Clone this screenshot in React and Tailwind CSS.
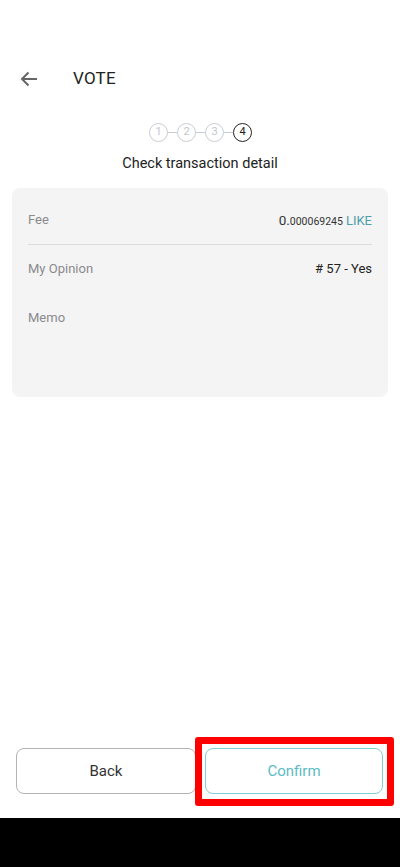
import React from "react";

const Step = ({ n, active }) => (
  <div
    className={`w-[19px] h-[19px] rounded-full border flex items-center justify-center text-[11px] ${
      active ? "border-[#222] text-[#222]" : "border-[#c9ccd6] text-[#c2c5cf]"
    }`}
  >
    {n}
  </div>
);

const Line = () => <div className="w-[9px] h-px bg-[#c9ccd6]" />;

const App = () => {
  return (
    <div className="w-[400px] h-[867px] flex flex-col bg-white font-['Roboto',sans-serif] overflow-hidden">
      <div className="h-[51px]" />
      <div className="h-[56px] flex items-center pl-[20px]">
        <svg width="18" height="16" viewBox="0 0 18 16" fill="none" stroke="#666" strokeWidth="2">
          <path d="M17 8H2M8.5 1.5L2 8l6.5 6.5" />
        </svg>
        <h1 className="ml-[35px] text-[17px] text-[#222] tracking-[0.2px]">VOTE</h1>
      </div>

      <div className="mt-[16px] flex items-center justify-center pl-[1px]">
        <Step n="1" />
        <Line />
        <Step n="2" />
        <Line />
        <Step n="3" />
        <Line />
        <Step n="4" active />
      </div>
      <p className="mt-[12px] text-center text-[14.5px] leading-[20px] text-[#222]">Check transaction detail</p>

      <div className="mt-[14px] mx-[12px] rounded-[8px] bg-[#f4f4f4] px-[16px] pt-[20px] h-[209px]">
        <div className="h-[24px] flex items-center justify-between">
          <span className="text-[13px] text-[#8a8a8e]">Fee</span>
          <span className="text-[#333]">
            <span className="text-[13.5px]">0.</span>
            <span className="text-[10.5px]">000069245</span>
            <span className="text-[13px] text-[#4f9eab] ml-[3px]">LIKE</span>
          </span>
        </div>
        <div className="mt-[12px] h-px bg-[#dcdcdc]" />
        <div className="mt-[12px] h-[24px] flex items-center justify-between">
          <span className="text-[13px] text-[#8a8a8e]">My Opinion</span>
          <span className="text-[13px] text-[#222]"># 57 - Yes</span>
        </div>
        <div className="mt-[25px] h-[24px] flex items-center">
          <span className="text-[13px] text-[#8a8a8e]">Memo</span>
        </div>
      </div>

      <div className="flex-1" />

      <div className="flex gap-[9px] pl-[16px] pr-[17px]">
        <button className="flex-1 h-[46px] rounded-[8px] border border-[#b3b3b3] text-[15px] text-[#333]">
          Back
        </button>
        <div className="flex-1 relative">
          <button className="w-full h-[46px] rounded-[8px] border border-[#7fcfd6] text-[15px] text-[#5bbcc6]">
            Confirm
          </button>
          <div className="absolute left-[-10px] right-[-11px] top-[-11px] bottom-[-12px] border-[7px] border-[#ff0000] rounded-[3px] pointer-events-none" />
        </div>
      </div>

      <div className="h-[24px]" />
      <div className="h-[49px] bg-black" />
    </div>
  );
};

export default App;
